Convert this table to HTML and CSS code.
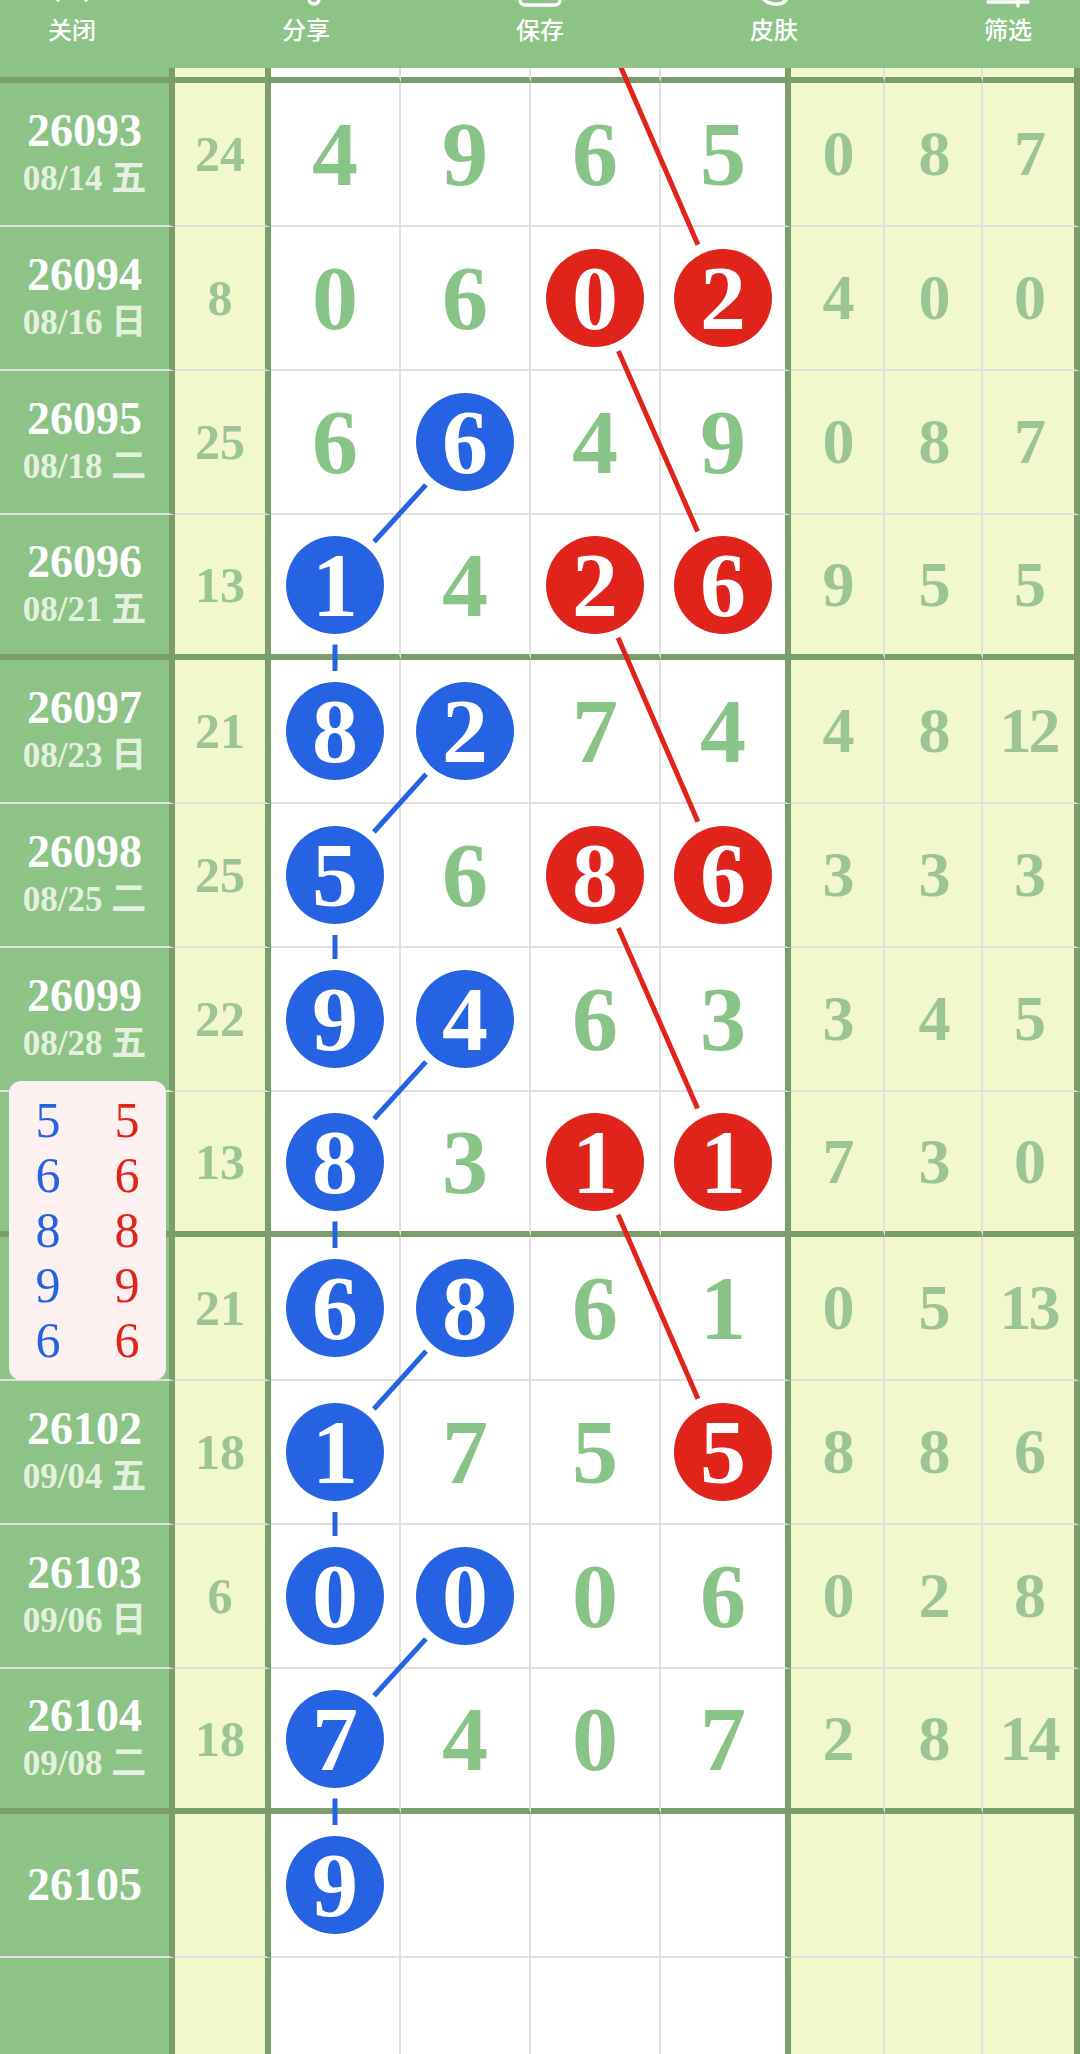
FILE: index.html
```html
<!DOCTYPE html>
<html lang="zh-CN">
<head>
  <meta charset="UTF-8" />
  <meta name="viewport" content="width=device-width, initial-scale=1.0"/>
  <title>走势图</title>
  <link rel="stylesheet" href="styles.css">
</head>
<body>
  <div class="page">
    <!-- 顶部工具栏 -->
    <header class="toolbar">
      <div class="tool">
        <svg class="tool-icon" viewBox="0 0 44 44"><path d="M8 4 L36 36 M36 4 L8 36" /></svg>
        <span>关闭</span>
      </div>
      <div class="tool">
        <svg class="tool-icon" viewBox="0 0 44 44"><circle cx="30" cy="8" r="5"/><circle cx="12" cy="22" r="5"/><circle cx="30" cy="35" r="5"/><path d="M16 20 L26 11 M16 25 L26 32"/></svg>
        <span>分享</span>
      </div>
      <div class="tool">
        <svg class="tool-icon" viewBox="0 0 44 44"><rect x="2" y="6" width="40" height="35" rx="5"/></svg>
        <span>保存</span>
      </div>
      <div class="tool">
        <svg class="tool-icon" viewBox="0 0 44 44"><path d="M30 6 C16 10 6 22 10 32 C14 42 30 42 34 36 C30 34 26 30 28 26"/></svg>
        <span>皮肤</span>
      </div>
      <div class="tool">
        <svg class="tool-icon" viewBox="0 0 44 44"><path d="M2 12 H42 M2 38 H30 M32 30 V42 M34 38 H42"/></svg>
        <span>筛选</span>
      </div>
    </header>

    <!-- 走势表 -->
    <div class="board">
      <div class="row stub group-end">
        <div class="cell c-issue"></div><div class="cell c-sum"></div>
        <div class="cell c-num"></div><div class="cell c-num"></div><div class="cell c-num"></div><div class="cell c-num last"></div>
        <div class="cell c-miss"></div><div class="cell c-miss"></div><div class="cell c-miss last"></div>
      </div>

      <div class="row">
        <div class="cell c-issue"><b>26093</b><i>08/14 五</i></div><div class="cell c-sum">24</div>
        <div class="cell c-num"><span class="num">4</span></div><div class="cell c-num"><span class="num">9</span></div><div class="cell c-num"><span class="num">6</span></div><div class="cell c-num last"><span class="num">5</span></div>
        <div class="cell c-miss">0</div><div class="cell c-miss">8</div><div class="cell c-miss last">7</div>
      </div>
      <div class="row">
        <div class="cell c-issue"><b>26094</b><i>08/16 日</i></div><div class="cell c-sum">8</div>
        <div class="cell c-num"><span class="num">0</span></div><div class="cell c-num"><span class="num">6</span></div><div class="cell c-num"><span class="ball red">0</span></div><div class="cell c-num last"><span class="ball red">2</span></div>
        <div class="cell c-miss">4</div><div class="cell c-miss">0</div><div class="cell c-miss last">0</div>
      </div>
      <div class="row">
        <div class="cell c-issue"><b>26095</b><i>08/18 二</i></div><div class="cell c-sum">25</div>
        <div class="cell c-num"><span class="num">6</span></div><div class="cell c-num"><span class="ball blue">6</span></div><div class="cell c-num"><span class="num">4</span></div><div class="cell c-num last"><span class="num">9</span></div>
        <div class="cell c-miss">0</div><div class="cell c-miss">8</div><div class="cell c-miss last">7</div>
      </div>
      <div class="row group-end">
        <div class="cell c-issue"><b>26096</b><i>08/21 五</i></div><div class="cell c-sum">13</div>
        <div class="cell c-num"><span class="ball blue">1</span></div><div class="cell c-num"><span class="num">4</span></div><div class="cell c-num"><span class="ball red">2</span></div><div class="cell c-num last"><span class="ball red">6</span></div>
        <div class="cell c-miss">9</div><div class="cell c-miss">5</div><div class="cell c-miss last">5</div>
      </div>

      <div class="row">
        <div class="cell c-issue"><b>26097</b><i>08/23 日</i></div><div class="cell c-sum">21</div>
        <div class="cell c-num"><span class="ball blue">8</span></div><div class="cell c-num"><span class="ball blue">2</span></div><div class="cell c-num"><span class="num">7</span></div><div class="cell c-num last"><span class="num">4</span></div>
        <div class="cell c-miss">4</div><div class="cell c-miss">8</div><div class="cell c-miss last">12</div>
      </div>
      <div class="row">
        <div class="cell c-issue"><b>26098</b><i>08/25 二</i></div><div class="cell c-sum">25</div>
        <div class="cell c-num"><span class="ball blue">5</span></div><div class="cell c-num"><span class="num">6</span></div><div class="cell c-num"><span class="ball red">8</span></div><div class="cell c-num last"><span class="ball red">6</span></div>
        <div class="cell c-miss">3</div><div class="cell c-miss">3</div><div class="cell c-miss last">3</div>
      </div>
      <div class="row">
        <div class="cell c-issue"><b>26099</b><i>08/28 五</i></div><div class="cell c-sum">22</div>
        <div class="cell c-num"><span class="ball blue">9</span></div><div class="cell c-num"><span class="ball blue">4</span></div><div class="cell c-num"><span class="num">6</span></div><div class="cell c-num last"><span class="num">3</span></div>
        <div class="cell c-miss">3</div><div class="cell c-miss">4</div><div class="cell c-miss last">5</div>
      </div>
      <!-- 这两期的期号被浮层盖住 -->
      <div class="row group-end">
        <div class="cell c-issue"></div><div class="cell c-sum">13</div>
        <div class="cell c-num"><span class="ball blue">8</span></div><div class="cell c-num"><span class="num">3</span></div><div class="cell c-num"><span class="ball red">1</span></div><div class="cell c-num last"><span class="ball red">1</span></div>
        <div class="cell c-miss">7</div><div class="cell c-miss">3</div><div class="cell c-miss last">0</div>
      </div>

      <div class="row">
        <div class="cell c-issue"></div><div class="cell c-sum">21</div>
        <div class="cell c-num"><span class="ball blue">6</span></div><div class="cell c-num"><span class="ball blue">8</span></div><div class="cell c-num"><span class="num">6</span></div><div class="cell c-num last"><span class="num">1</span></div>
        <div class="cell c-miss">0</div><div class="cell c-miss">5</div><div class="cell c-miss last">13</div>
      </div>
      <div class="row">
        <div class="cell c-issue"><b>26102</b><i>09/04 五</i></div><div class="cell c-sum">18</div>
        <div class="cell c-num"><span class="ball blue">1</span></div><div class="cell c-num"><span class="num">7</span></div><div class="cell c-num"><span class="num">5</span></div><div class="cell c-num last"><span class="ball red">5</span></div>
        <div class="cell c-miss">8</div><div class="cell c-miss">8</div><div class="cell c-miss last">6</div>
      </div>
      <div class="row">
        <div class="cell c-issue"><b>26103</b><i>09/06 日</i></div><div class="cell c-sum">6</div>
        <div class="cell c-num"><span class="ball blue">0</span></div><div class="cell c-num"><span class="ball blue">0</span></div><div class="cell c-num"><span class="num">0</span></div><div class="cell c-num last"><span class="num">6</span></div>
        <div class="cell c-miss">0</div><div class="cell c-miss">2</div><div class="cell c-miss last">8</div>
      </div>
      <div class="row group-end">
        <div class="cell c-issue"><b>26104</b><i>09/08 二</i></div><div class="cell c-sum">18</div>
        <div class="cell c-num"><span class="ball blue">7</span></div><div class="cell c-num"><span class="num">4</span></div><div class="cell c-num"><span class="num">0</span></div><div class="cell c-num last"><span class="num">7</span></div>
        <div class="cell c-miss">2</div><div class="cell c-miss">8</div><div class="cell c-miss last">14</div>
      </div>

      <div class="row">
        <div class="cell c-issue"><b>26105</b></div><div class="cell c-sum"></div>
        <div class="cell c-num"><span class="ball blue">9</span></div><div class="cell c-num"></div><div class="cell c-num"></div><div class="cell c-num last"></div>
        <div class="cell c-miss"></div><div class="cell c-miss"></div><div class="cell c-miss last"></div>
      </div>
      <div class="row">
        <div class="cell c-issue"></div><div class="cell c-sum"></div>
        <div class="cell c-num"></div><div class="cell c-num"></div><div class="cell c-num"></div><div class="cell c-num last"></div>
        <div class="cell c-miss"></div><div class="cell c-miss"></div><div class="cell c-miss last"></div>
      </div>
    </div>

    <!-- 连线 -->
    <svg class="links" width="1080" height="2054" viewBox="0 0 1080 2054">
      <g class="red-line">
        <line x1="618.1" y1="60.7" x2="697.9" y2="244.8"/>
        <line x1="618.4" y1="351.1" x2="697.6" y2="531.4"/>
        <line x1="618.1" y1="637.7" x2="697.9" y2="821.8"/>
        <line x1="618.4" y1="928.1" x2="697.6" y2="1108.4"/>
        <line x1="618.1" y1="1214.7" x2="697.9" y2="1398.8"/>
      </g>
      <g class="blue-line">
        <line x1="425.9" y1="484.9" x2="374.1" y2="541.7"/>
        <line x1="426.1" y1="774.1" x2="373.9" y2="832.0"/>
        <line x1="425.9" y1="1061.9" x2="374.1" y2="1118.7"/>
        <line x1="426.1" y1="1351.1" x2="373.9" y2="1409.0"/>
        <line x1="425.9" y1="1638.9" x2="374.1" y2="1695.7"/>
        <line x1="335" y1="644.5" x2="335" y2="671"/>
        <line x1="335" y1="935" x2="335" y2="959"/>
        <line x1="335" y1="1221.5" x2="335" y2="1248"/>
        <line x1="335" y1="1512" x2="335" y2="1536"/>
        <line x1="335" y1="1798.5" x2="335" y2="1825"/>
      </g>
    </svg>

    <!-- 选号浮层 -->
    <div class="picker">
      <ul class="pick blue">
        <li>5</li><li>6</li><li>8</li><li>9</li><li>6</li>
      </ul>
      <ul class="pick red">
        <li>5</li><li>6</li><li>8</li><li>9</li><li>6</li>
      </ul>
    </div>
  </div>
</body>
</html>
```

FILE: styles.css
```css
* { box-sizing: border-box; }
body {
  margin: 0;
  background: #fff;
  font-family: "Liberation Serif", "Noto Sans CJK SC", serif;
}
.page {
  position: relative;
  width: 1080px;
  height: 2054px;
  overflow: hidden;
}

/* 工具栏 */
.toolbar {
  position: relative;
  z-index: 3;
  height: 68px;
  background: #8dc387;
  display: flex;
  justify-content: space-between;
  overflow: hidden;
}
.tool {
  width: 144px;
  display: flex;
  flex-direction: column;
  align-items: center;
  color: #fff;
  font-family: "Noto Sans CJK SC", sans-serif;
  font-weight: 500;
  font-size: 24px;
  line-height: 28px;
}
.tool-icon {
  width: 44px;
  height: 44px;
  margin-top: -36px;
  margin-bottom: 7px;
  fill: none;
  stroke: #fff;
  stroke-width: 3.5;
  stroke-linecap: round;
  stroke-linejoin: round;
}

/* 表格 */
.board {
  position: relative;
  z-index: 1;
}
.row {
  display: grid;
  grid-template-columns: 175px 96px 130px 130px 130px 130px 94px 98px 97px;
  height: 144px;
}
.row.group-end { height: 145px; }
.row.stub { height: 15px; }
.cell {
  display: flex;
  align-items: center;
  justify-content: center;
  border-bottom: 2px solid #e0e0e0;
  border-right: 2px solid #e0e0e0;
}
.group-end .cell { border-bottom: 6px solid #7a9d6a; }
.cell.last { border-right: 6px solid #7a9d6a; }

.c-issue {
  flex-direction: column;
  background: #8dc387;
  border-right: 6px solid #7a9d6a;
  color: #fff;
  font-weight: bold;
}
.c-issue b {
  font-size: 46px;
  line-height: 50px;
}
.c-issue i {
  font-style: normal;
  font-size: 35px;
  line-height: 46px;
  color: #e4f1de;
}
.c-sum {
  background: #f0f8cc;
  border-right: 6px solid #7a9d6a;
  color: #9dc494;
  font-weight: bold;
  font-size: 50px;
}
.c-num { background: #fff; }
.c-miss {
  background: #f0f8cc;
  color: #9dc494;
  font-weight: bold;
  font-size: 64px;
  letter-spacing: -3px;
}
.num {
  color: #88c488;
  font-weight: bold;
  font-size: 92px;
  line-height: 1;
}
.ball {
  width: 98px;
  height: 98px;
  border-radius: 50%;
  display: flex;
  align-items: center;
  justify-content: center;
  color: #fff;
  font-weight: bold;
  font-size: 92px;
  line-height: 1;
}
.ball.red { background: #e0241b; }
.ball.blue { background: #2563e3; }

/* 连线 */
.links {
  position: absolute;
  top: 0;
  left: 0;
  z-index: 2;
  pointer-events: none;
}
.links line { stroke-width: 5; }
.red-line { stroke: #e0241b; }
.blue-line { stroke: #2563e3; }

/* 浮层 */
.picker {
  position: absolute;
  z-index: 4;
  left: 9px;
  top: 1081px;
  width: 157px;
  height: 299px;
  background: #fdf0f0;
  border-radius: 12px;
  display: flex;
  justify-content: space-between;
  padding: 12px 24px;
}
.pick {
  list-style: none;
  margin: 0;
  padding: 0;
  width: 30px;
  font-size: 50px;
  line-height: 55px;
  text-align: center;
}
.pick.blue { color: #2563e3; }
.pick.red { color: #e0241b; }
```
